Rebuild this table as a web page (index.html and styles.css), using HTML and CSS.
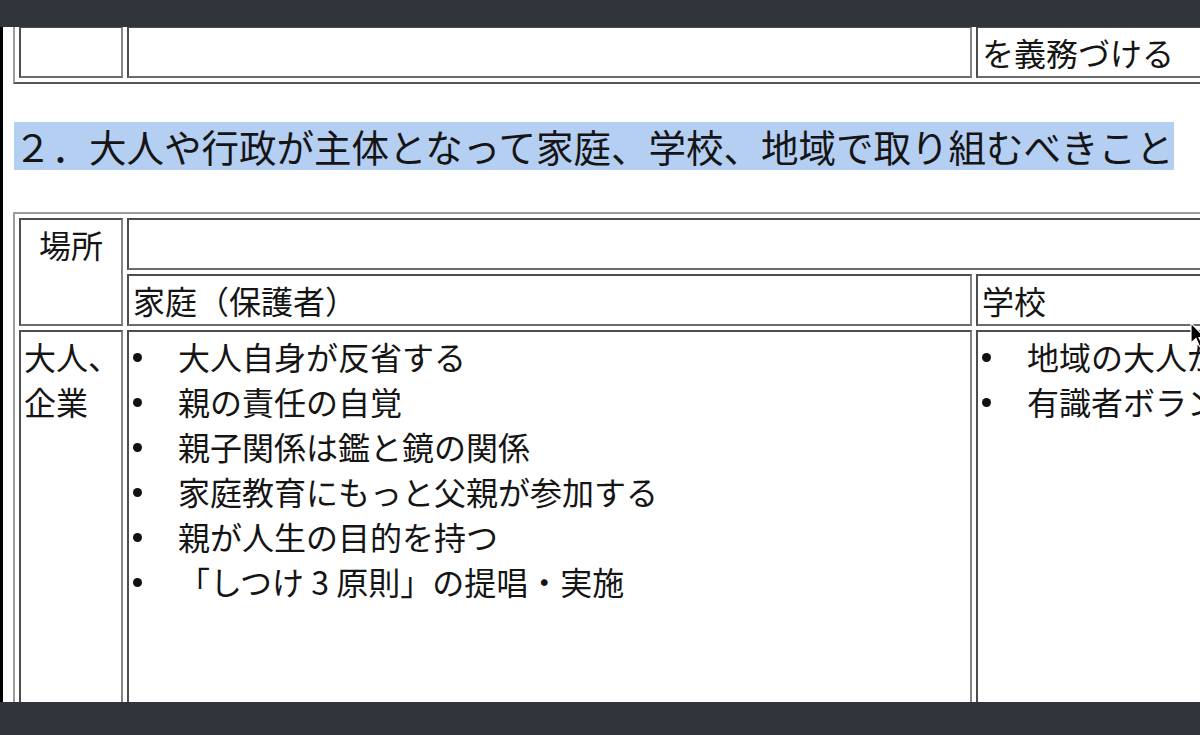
FILE: index.html
```html
<!DOCTYPE html>
<html lang="ja">

<head>
    <meta charset="UTF-8">
    <meta name="viewport" content="width=device-width, initial-scale=1.0">
    <title>大人や行政が主体となって取り組むべきこと</title>
    <link rel="stylesheet" href="styles.css">
</head>

<body>
    <div class="screen">
        <div class="bar"></div>
        <div class="view">
            <div class="edge"></div>
            <div class="page">
                <table class="grid grid-top">
                    <colgroup>
                        <col class="col-who">
                        <col class="col-home">
                        <col class="col-school">
                    </colgroup>
                    <tr>
                        <td>&nbsp;</td>
                        <td>&nbsp;</td>
                        <td>を義務づける</td>
                    </tr>
                </table>

                <h2 class="heading"><span class="selected">２．大人や行政が主体となって家庭、学校、地域で取り組むべきこと</span></h2>

                <table class="grid">
                    <colgroup>
                        <col class="col-who">
                        <col class="col-home">
                        <col class="col-school">
                    </colgroup>
                    <tr>
                        <td class="place" rowspan="2">場所</td>
                        <td colspan="2">&nbsp;</td>
                    </tr>
                    <tr>
                        <td>家庭（保護者）</td>
                        <td>学校</td>
                    </tr>
                    <tr class="body-row">
                        <td class="who">大人、<br>企業</td>
                        <td>
                            <ul class="items">
                                <li>大人自身が反省する</li>
                                <li>親の責任の自覚</li>
                                <li>親子関係は鑑と鏡の関係</li>
                                <li>家庭教育にもっと父親が参加する</li>
                                <li>親が人生の目的を持つ</li>
                                <li>「しつけ 3 原則」の提唱・実施</li>
                            </ul>
                        </td>
                        <td>
                            <ul class="items">
                                <li>地域の大人が見守る</li>
                                <li>有識者ボランティア</li>
                            </ul>
                        </td>
                    </tr>
                </table>

                <svg class="cursor" width="16" height="26" viewBox="0 0 16 26">
                    <path d="M1 1 L1 21 L6 16.5 L9.5 24.5 L12.5 23 L9 15.5 L15 15.5 Z" fill="#000" stroke="#fff" stroke-width="1.2" />
                </svg>
            </div>
        </div>
        <div class="bar bar-bottom"></div>
    </div>
</body>

</html>
```

FILE: styles.css
```css
body {
    margin: 0;
    padding: 0;
    font-family: "Noto Sans CJK JP", sans-serif;
    color: #151515;
    background-color: #30353c;
    overflow: hidden;
}

.screen {
    height: 735px;
    display: flex;
    flex-direction: column;
}

.bar {
    height: 27px;
    background-color: #30353c;
    flex-shrink: 0;
}

.bar-bottom {
    height: 33px;
}

.view {
    flex: 1;
    display: flex;
    min-height: 0;
}

.edge {
    width: 3px;
    background-color: #000;
}

.page {
    flex: 1;
    position: relative;
    overflow: hidden;
    padding-left: 10px;
    background-color: #fff;
}

/* old-style bordered table, border="1" */
.grid {
    table-layout: fixed;
    width: 1469px;
    border-collapse: separate;
    border-spacing: 4px;
    border: 2px solid;
    border-color: #9c9c9c #555 #555 #9c9c9c;
    font-size: 32px;
    line-height: 45px;
}

.grid-top {
    margin-top: -7px;
}

.col-who {
    width: 104px;
}

.col-home {
    width: 845px;
}

.col-school {
    width: 500px;
}

.grid td {
    padding: 2px 4px 1px;
    border: 2px solid;
    border-color: #4e4e4e #858585 #6a6a6a #4e4e4e;
    vertical-align: top;
    white-space: nowrap;
    overflow: visible;
}

.grid td.place {
    text-align: center;
}

.grid td.who {
    padding-left: 3px;
}

.body-row td {
    height: 420px;
}

.heading {
    margin: 38px 0 42px 1px;
    font-size: 37.5px;
    font-weight: normal;
    line-height: 48px;
}

.selected {
    display: inline-block;
    height: 48px;
    background-color: #b5cff3;
}

.items {
    list-style: none;
    margin: 0;
    padding: 0;
}

.items li::before {
    content: "";
    display: inline-block;
    width: 9px;
    height: 9px;
    margin: 0 36px 0 0;
    border-radius: 50%;
    background-color: #111;
    vertical-align: 8px;
}

.cursor {
    position: absolute;
    left: 1187px;
    top: 295px;
}
```
